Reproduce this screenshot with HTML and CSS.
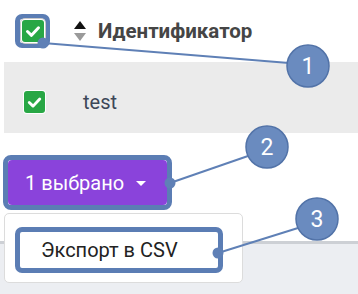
FILE: index.html
```html
<!DOCTYPE html>
<html lang="ru">
<head>
<meta charset="utf-8">
<link rel="stylesheet" href="styles.css">
</head>
<body>
<div class="card">
  <div class="table">
    <div class="row head">
      <span class="hl hl-check"><span class="check"><svg viewBox="0 0 22 22" width="22" height="22"><path d="M5.5 11.5l4 3.8 7-7.5" fill="none" stroke="#fff" stroke-width="3" stroke-linecap="round" stroke-linejoin="round"/></svg></span></span>
      <span class="sort"><svg viewBox="0 0 12 21" width="12" height="21"><path d="M6 0L12 8H0z" fill="#111"/><path d="M0 12H12L6 20z" fill="#9a9a9a"/></svg></span>
      <span class="th">Идентификатор</span>
    </div>
    <div class="row data">
      <span class="check"><svg viewBox="0 0 22 22" width="22" height="22"><path d="M5.5 11.5l4 3.8 7-7.5" fill="none" stroke="#fff" stroke-width="3" stroke-linecap="round" stroke-linejoin="round"/></svg></span>
      <span class="td">test</span>
    </div>
  </div>
  <div class="actions">
    <div class="group">
      <span class="hl hl-btn"><span class="btn">1 выбрано <span class="caret"></span></span></span>
      <div class="menu">
        <span class="hl hl-item"><span class="item">Экспорт в CSV</span></span>
      </div>
    </div>
  </div>
</div>
<svg class="notes" width="358" height="294" viewBox="0 0 358 294">
  <g stroke="#5f80b6" stroke-width="2">
    <line x1="43" y1="43" x2="289" y2="63"/>
    <line x1="170" y1="183" x2="248" y2="156"/>
    <line x1="218" y1="253" x2="298" y2="228"/>
  </g>
  <g fill="#5f80b6">
    <circle cx="43" cy="43" r="5.5"/>
    <circle cx="170" cy="183" r="5.5"/>
    <circle cx="218" cy="253" r="5.5"/>
  </g>
  <g class="badge">
    <circle cx="308" cy="66" r="21"/>
    <circle cx="267" cy="147" r="21"/>
    <circle cx="317" cy="219" r="21"/>
  </g>
  <g class="num">
    <text x="308" y="74">1</text>
    <text x="267" y="155">2</text>
    <text x="317" y="227">3</text>
  </g>
</svg>
</body>
</html>
```
FILE: styles.css
```css
html, body {
  margin: 0;
  padding: 0;
}
body {
  width: 358px;
  height: 294px;
  background: #eceef2;
  font-family: Roboto, "Liberation Sans", sans-serif;
  position: relative;
  overflow: hidden;
}
.card {
  background: #fff;
  height: 241px;
  border-bottom: 3px solid #cdd0d5;
  box-sizing: content-box;
}
.table {
  margin-left: 4px;
}
.row {
  display: flex;
  align-items: center;
}
.head {
  height: 62px;
  padding-left: 11px;
}
.data {
  height: 63px;
  padding-top: 8px;
  padding-left: 20px;
  background: #ebebeb;
}
.hl {
  display: inline-flex;
  border: 5px solid #5b7db4;
  border-radius: 7px;
  box-sizing: border-box;
}
.hl-check {
  padding: 1px;
  width: 35px;
  height: 34px;
  align-items: center;
  justify-content: center;
}
.check {
  width: 22px;
  height: 22px;
  background: #28a745;
  border-radius: 3px;
  box-shadow: 0 0 0 1px #fff, 0 0 0 2px #c9c9c9;
  display: inline-flex;
}
.data .check {
  width: 21px;
  height: 22px;
  box-shadow: 0 0 0 1px #fff;
}
.sort {
  margin-left: 24px;
  display: inline-flex;
  margin-top: 0;
}
.th {
  margin-left: 12px;
  font-weight: bold;
  font-size: 20.5px;
  color: #454545;
  letter-spacing: 0;
}
.td {
  margin-left: 38px;
  font-size: 20px;
  color: #3c4758;
}
.actions {
  padding-top: 22px;
  padding-left: 3px;
}
.group {
  position: relative;
  display: inline-block;
}
.hl-btn {
  border-radius: 8px;
  width: 169px;
  height: 55px;
}
.btn {
  flex: 1;
  background: #8a43db;
  border-radius: 4px;
  color: #fff;
  font-size: 20px;
  display: flex;
  align-items: center;
  padding-left: 17px;
}
.caret {
  width: 0;
  height: 0;
  border-left: 5px solid transparent;
  border-right: 5px solid transparent;
  border-top: 5px solid #fff;
  margin-left: 12px;
  margin-top: 2px;
}
.menu {
  position: absolute;
  left: 1px;
  top: 58px;
  width: 239px;
  height: 70px;
  box-sizing: border-box;
  background: #fff;
  border: 1px solid #dcdcdc;
  border-radius: 5px;
  padding: 13px 0 0 10px;
}
.hl-item {
  width: 208px;
  height: 46px;
}
.item {
  flex: 1;
  display: flex;
  align-items: center;
  padding-left: 21px;
  font-size: 20px;
  color: #222;
}
.notes {
  position: absolute;
  left: 0;
  top: 0;
}
.badge circle {
  fill: #6a8bbf;
  stroke: #5273a8;
  stroke-width: 1.5;
}
.num text {
  fill: #fff;
  font-family: Roboto, "Liberation Sans", sans-serif;
  font-size: 23px;
  text-anchor: middle;
}
```
